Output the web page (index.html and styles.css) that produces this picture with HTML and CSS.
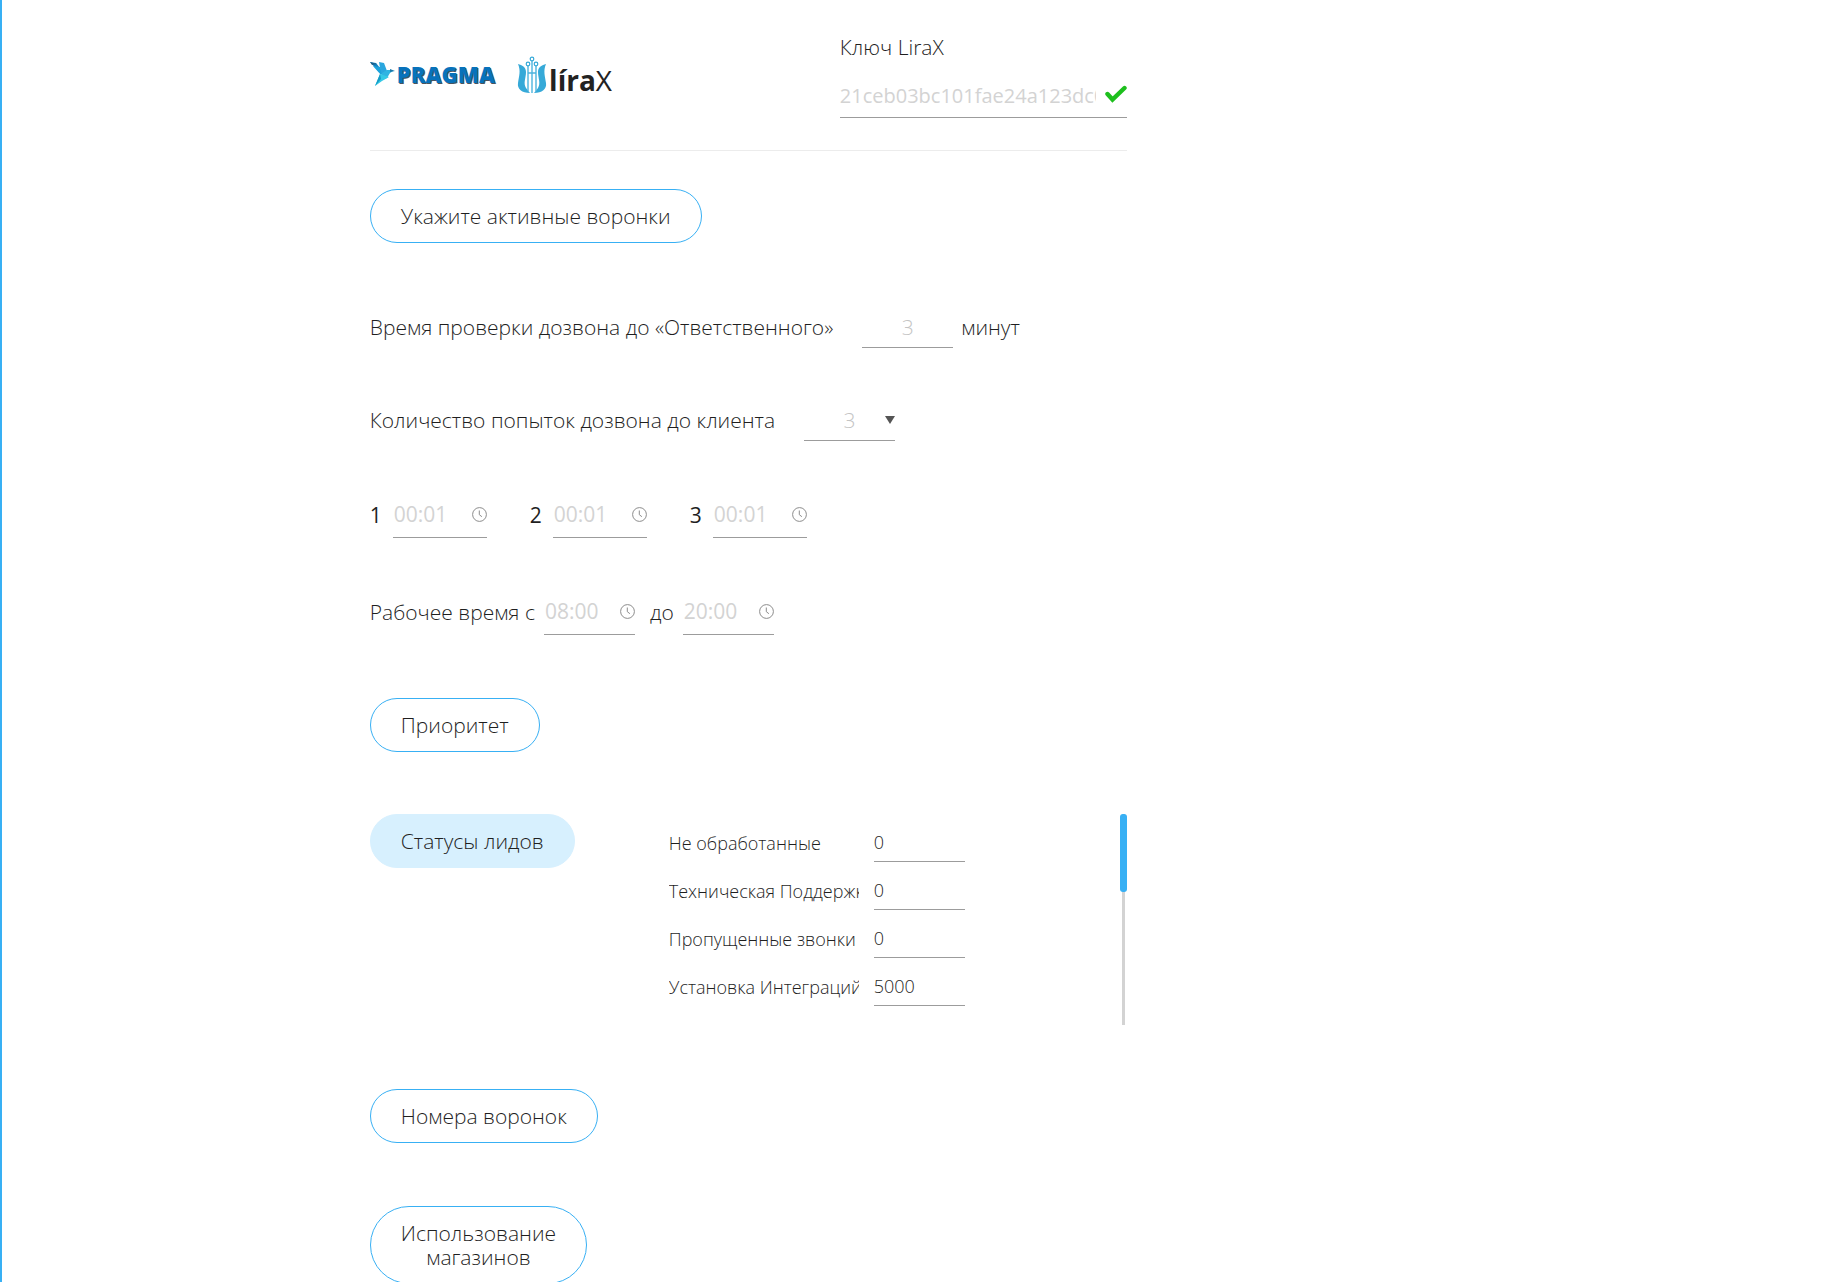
FILE: index.html
```html
<!DOCTYPE html>
<html lang="ru">
<head>
<meta charset="utf-8">
<meta name="viewport" content="width=device-width, initial-scale=1">
<title>Pragma LiraX</title>
<link rel="stylesheet" href="styles.css">
</head>
<body>
<!-- icons used more than once -->
<svg class="sprite" aria-hidden="true">
  <symbol id="clock" viewBox="0 0 15 15">
    <circle cx="7.5" cy="7.5" r="6.9" fill="none" stroke="#8c8c8c" stroke-width="1"/>
    <path d="M7.3 3.5v4.2l2.6 2" fill="none" stroke="#8c8c8c" stroke-width="1"/>
  </symbol>
</svg>

<main class="settings">
  <header class="header">
    <div class="logos">
      <div class="logo-pragma">
        <svg width="25" height="26" viewBox="0 0 25 26">
          <path d="M0 1l6 1 4 5-1 4z" fill="#1583c0"/>
          <path d="M0 1l7 2-5 1z" fill="#1d5f88"/>
          <path d="M3 5l7 1 3 6-2 2z" fill="#1ba3dc"/>
          <path d="M9 1l5 1 3 8-5 5-2-8z" fill="#2aa6de"/>
          <path d="M12 12l5-3 4 0 2 1-3 2-3 5-7 3z" fill="#2fb4e2"/>
          <path d="M20 8l5 2-5 1z" fill="#1a78aa"/>
          <path d="M10 13l9 3-7 4-7 5z" fill="#34c9e6"/>
          <path d="M10 13l1 5-6 7z" fill="#169cc6"/>
        </svg>
        <span>PRAGMA</span>
      </div>
      <div class="logo-lirax">
        <svg width="30" height="38" viewBox="0 0 30 38">
          <path d="M1 8c4 1 8 3 8 8 0 6-3 11 0 16l4 5C5 37 0 33 1 27c1-7 3-12 0-19z" fill="#36a9d8"/>
          <path d="M29 8c-4 1-8 3-8 8 0 6 3 11 0 16l-4 5c8 0 13-4 12-10-1-7-3-12 0-19z" fill="#36a9d8"/>
          <path d="M15 5v32M11 10v25M19 10v25M11 17h8" fill="none" stroke="#4db4de" stroke-width="1.4"/>
          <g fill="#fff" stroke="#36a9d8" stroke-width="1.2">
            <circle cx="15" cy="3" r="1.8"/>
            <circle cx="11" cy="8" r="1.8"/>
            <circle cx="19" cy="8" r="1.8"/>
          </g>
        </svg>
        <span><b>líra</b>X</span>
      </div>
    </div>
    <div class="key">
      <label for="key">Ключ LiraX</label>
      <div class="key-field">
        <input type="text" id="key" value="21ceb03bc101fae24a123dc0">
        <svg width="22" height="18" viewBox="0 0 22 18">
          <path d="M2.5 9l5 5.5L19.5 3" fill="none" stroke="#1dbf1d" stroke-width="4.4" stroke-linecap="round"/>
        </svg>
      </div>
    </div>
  </header>

  <button type="button" class="btn">Укажите активные воронки</button>

  <div class="row check">
    <label for="check">Время проверки дозвона до «Ответственного»</label>
    <input type="text" id="check" class="short wide-gap" value="3">
    <span class="unit">минут</span>
  </div>

  <div class="row">
    <label for="count">Количество попыток дозвона до клиента</label>
    <div class="select wide-gap">
      <select id="count">
        <option>1</option>
        <option>2</option>
        <option selected>3</option>
      </select>
      <svg width="10" height="8" viewBox="0 0 10 8"><path d="M0 0h10L5 8z" fill="#555"/></svg>
    </div>
  </div>

  <div class="row attempts">
    <div class="attempt">
      <label for="t1">1</label>
      <div class="time"><input type="text" id="t1" value="00:01"><svg><use href="#clock"/></svg></div>
    </div>
    <div class="attempt">
      <label for="t2">2</label>
      <div class="time"><input type="text" id="t2" value="00:01"><svg><use href="#clock"/></svg></div>
    </div>
    <div class="attempt">
      <label for="t3">3</label>
      <div class="time"><input type="text" id="t3" value="00:01"><svg><use href="#clock"/></svg></div>
    </div>
  </div>

  <div class="row work">
    <label for="from">Рабочее время с</label>
    <div class="time"><input type="text" id="from" value="08:00"><svg><use href="#clock"/></svg></div>
    <label for="to" class="to">до</label>
    <div class="time"><input type="text" id="to" value="20:00"><svg><use href="#clock"/></svg></div>
  </div>

  <button type="button" class="btn">Приоритет</button>

  <section class="leads">
    <button type="button" class="btn active">Статусы лидов</button>
    <div class="statuses">
      <div class="status"><label for="s1">Не обработанные</label><input type="text" id="s1" value="0"></div>
      <div class="status"><label for="s2">Техническая Поддержка</label><input type="text" id="s2" value="0"></div>
      <div class="status"><label for="s3">Пропущенные звонки</label><input type="text" id="s3" value="0"></div>
      <div class="status"><label for="s4">Установка Интеграций</label><input type="text" id="s4" value="5000"></div>
    </div>
    <div class="scroll"><div class="thumb"></div></div>
  </section>

  <button type="button" class="btn">Номера воронок</button>
  <button type="button" class="btn">Использование<br>магазинов</button>
</main>
</body>
</html>
```
FILE: styles.css
```css
* {
  box-sizing: border-box;
}

body {
  margin: 0;
  height: 100vh;
  overflow: hidden;
  border-left: 2px solid #38b0f4;
  background: #fff;
  color: #1f1f1f;
  font: 300 21px/24px "Open Sans", sans-serif;
}

.sprite {
  display: none;
}

.settings {
  max-width: 757px;
  margin-left: calc(20% - 1px);
}

input, select {
  border: 0;
  padding: 0;
  background: none;
  color: #d3d3d3;
  font: inherit;
  outline: none;
}

/* header */
.header {
  display: flex;
  justify-content: space-between;
  padding: 35px 0 32px;
  margin-bottom: 38px;
  border-bottom: 1px solid #ececec;
}

.logos {
  display: flex;
  align-items: flex-start;
  gap: 22px;
  padding-top: 21px;
}

.logo-pragma {
  display: flex;
  align-items: center;
  gap: 2px;
  height: 36px;
  color: #0872bb;
  font-size: 22px;
  font-weight: 800;
  text-shadow: 1px 1px 0 #4a545e;
}

.logo-lirax {
  display: flex;
  align-items: flex-end;
  gap: 2px;
  color: #222;
  font-size: 28px;
  font-weight: 400;
  line-height: 28px;
}

.logo-lirax b {
  font-weight: 700;
}

.key {
  width: 287px;
}

.key label {
  display: block;
}

.key-field {
  display: flex;
  align-items: center;
  justify-content: space-between;
  height: 47px;
  margin-top: 12px;
  border-bottom: 1px solid #9c9c9c;
}

.key-field input {
  width: 256px;
  padding-top: 3px;
  font-size: 20px;
  font-weight: 400;
}

/* pill buttons */
.btn {
  display: block;
  margin: 0 0 63px;
  padding: 14px 30px;
  border: 1px solid #38b0f4;
  border-radius: 40px;
  background: #fff;
  color: inherit;
  font: inherit;
  cursor: pointer;
}

.btn.active {
  border-color: #d7f0fe;
  background: #d7f0fe;
}

/* rows */
.row {
  display: flex;
  align-items: center;
  margin-bottom: 50px;
}

.check {
  margin-bottom: 51px;
}

.short {
  width: 91px;
  height: 42px;
  border-bottom: 1px solid #9c9c9c;
  text-align: center;
}

.short, .select select {
  color: #c4c4c4;
}

.wide-gap {
  margin-left: 29px;
}

.unit {
  margin-left: 8px;
}

.select {
  display: flex;
  align-items: center;
  width: 91px;
  height: 42px;
  border-bottom: 1px solid #9c9c9c;
}

.select select {
  flex: 1;
  padding-left: 10px;
  appearance: none;
  text-align: center;
  text-align-last: center;
}

.time {
  display: flex;
  align-items: center;
  justify-content: space-between;
  width: 91px;
  height: 47px;
  border-bottom: 1px solid #9c9c9c;
}

.time input {
  width: 54px;
  padding-left: 1px;
  font-weight: 400;
}

.time svg {
  width: 15px;
  height: 15px;
}

.attempts {
  gap: 43px;
}

.attempt {
  display: flex;
  align-items: center;
  gap: 11px;
  font-weight: 400;
}

.attempt .time {
  width: 94px;
}

.work {
  gap: 9px;
  margin-bottom: 63px;
}

.to {
  margin-left: 6px;
}

/* lead statuses */
.leads {
  display: grid;
  grid-template-columns: 299px 1fr 7px;
  align-items: start;
  justify-items: start;
  margin-top: -1px;
  margin-bottom: 64px;
}

.leads .btn {
  margin: 0;
}

.statuses {
  padding-top: 10px;
  font-size: 18px;
}

.status {
  display: flex;
  align-items: center;
  gap: 15px;
  margin-bottom: 10px;
}

.status label {
  width: 190px;
  overflow: hidden;
  white-space: nowrap;
}

.status input {
  width: 91px;
  height: 38px;
  padding-bottom: 2px;
  border-bottom: 1px solid #9c9c9c;
  color: inherit;
}

.scroll {
  width: 7px;
  height: 211px;
  background: linear-gradient(#d3d3d3, #d3d3d3) center / 3px 100% no-repeat;
}

.thumb {
  height: 78px;
  border-radius: 3px;
  background: #38b0f4;
}
```
